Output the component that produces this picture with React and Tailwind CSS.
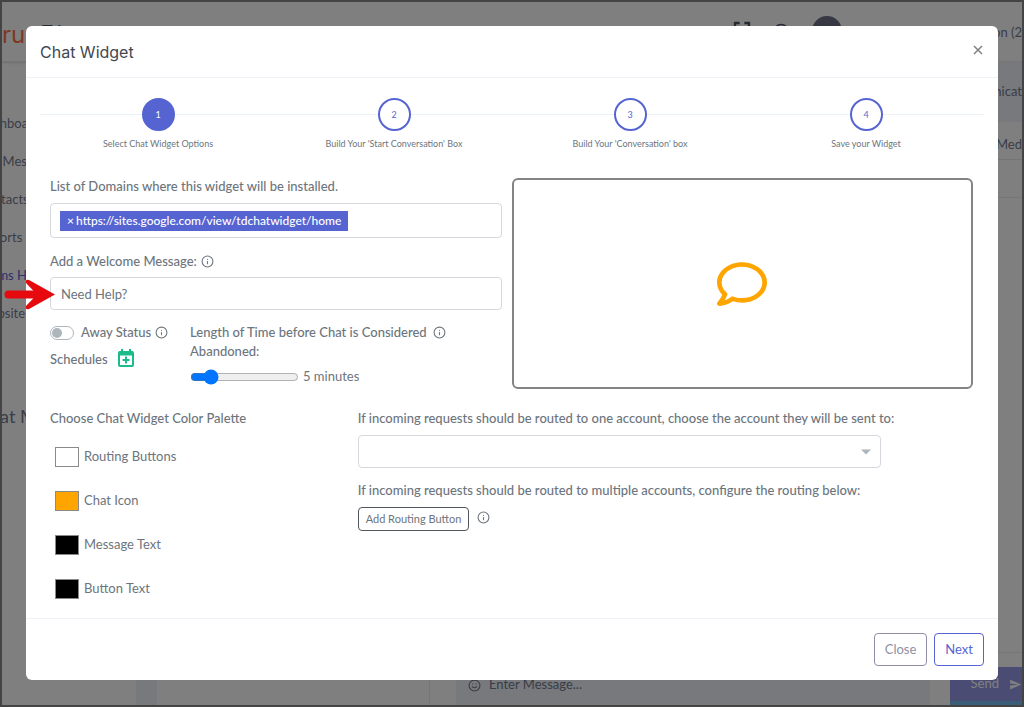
import { useState } from "react";
import { FaRegComment } from "react-icons/fa";
import { MdFullscreen, MdSend } from "react-icons/md";
import { Info, Search, Smile } from "lucide-react";

const steps = [
  "Select Chat Widget Options",
  "Build Your 'Start Conversation' Box",
  "Build Your 'Conversation' box",
  "Save your Widget",
];

const navItems = ["Dashboard", "Call Messages", "Contacts", "Reports", "Teams Hub", "Website Widget"];

function InfoIcon() {
  return <Info className="inline-block shrink-0 text-[#6c757d]" size={13} strokeWidth={2} aria-label="More information" />;
}

function Backdrop() {
  return (
    <div className="col-start-1 row-start-1 flex flex-col min-w-0 overflow-hidden bg-white text-[#757a90]" aria-hidden="true">
      <header className="h-[60px] shrink-0 flex items-start border-b border-[#ececec] shadow-sm">
        <span className="text-2xl leading-[66px] text-[#ff7048] w-10 font-['Inter',sans-serif]">ru</span>
        <span className="text-lg leading-6 pt-[17px] text-[#50546a]">Tristate</span>
        <div className="ml-auto flex gap-4 pt-3.5 text-[#50546a]">
          <MdFullscreen size={28} />
          <Search className="mt-1.5" size={20} />
          <div className="w-[30px] h-[30px] ml-1 rounded-full bg-[#6d7088]" />
        </div>
        <span className="w-[180px] pt-5 text-right leading-5">Division (2</span>
      </header>
      <div className="flex flex-1 min-h-0">
        <nav className="w-[134px] shrink-0 overflow-hidden pt-[42px]">
          {navItems.map((item) => (
            <div key={item} className={item === "Teams Hub" ? "h-[38px] leading-[38px] -ml-6 text-[#5a61d8]" : "h-[38px] leading-[38px] -ml-6"}>
              {item}
            </div>
          ))}
          <div className="mt-[72px] -ml-6 text-lg leading-6">Chat Messages</div>
        </nav>
        <div className="w-[21px] shrink-0 bg-[#eff3f8]" />
        <div className="w-[273px] shrink-0 border-r border-[#ececec]" />
        <div className="flex-1 flex flex-col min-w-0">
          <div className="h-[60px] shrink-0 bg-[#eff3f8] text-right leading-[58px]">Communicat</div>
          <div className="h-[38px] shrink-0 border-b border-[#e8e8e8] text-right leading-[44px]">Social Med</div>
          <div className="h-[38px] shrink-0 border-b border-[#ececec]" />
          <div className="flex-1 border-b border-[#ececec] mb-3.5" />
          <div className="flex h-[38px] shrink-0 pl-[26px]">
            <div className="flex-1 mr-5 bg-[#eff3f8] flex items-center gap-2 pl-3 pb-0.5">
              <Smile size={13} />
              <span>Enter Message...</span>
            </div>
            <div className="w-[72px] flex items-center justify-end gap-2.5 bg-[#9499e8] text-white border-b-4 border-[#74bdf0]">
              Send <MdSend size={13} />
            </div>
          </div>
        </div>
      </div>
    </div>
  );
}

function Stepper() {
  return (
    <ol className="grid grid-cols-4 pt-5">
      {steps.map((label, i) => (
        <li key={label} className="text-center text-[9px] leading-3">
          <div className="flex items-center">
            <span className="flex-1 h-px bg-[#eaf2fa]" />
            <span
              className={
                i === 0
                  ? "w-[33px] h-[33px] rounded-full flex items-center justify-center border-2 border-[#5664d2] bg-[#5664d2] text-white"
                  : "w-[33px] h-[33px] rounded-full flex items-center justify-center border-2 border-[#5664d2] bg-white text-[#5664d2]"
              }
            >
              {i + 1}
            </span>
            <span className="flex-1 h-px bg-[#eaf2fa]" />
          </div>
          <div className="mt-[7px]">{label}</div>
        </li>
      ))}
    </ol>
  );
}

function ColorField({ label, initial }) {
  const [color, setColor] = useState(initial);
  return (
    <label className="flex items-center gap-[5px] h-5">
      <input
        type="color"
        value={color}
        onChange={(e) => setColor(e.target.value)}
        className="w-6 h-5 p-0 border border-[#8a8a8a] appearance-none [&::-webkit-color-swatch-wrapper]:p-0 [&::-webkit-color-swatch]:border-0"
      />
      {label}
    </label>
  );
}

function WidgetOptions() {
  const [minutes, setMinutes] = useState(5);
  return (
    <div className="grid grid-cols-[minmax(0,49fr)_minmax(0,50fr)] gap-2.5">
      <div>
        <label htmlFor="domains" className="block leading-5 font-medium">
          List of Domains where this widget will be installed.
        </label>
        <div className="mt-[7px] h-[35px] flex items-center border border-[#d5d9de] rounded px-[9px]">
          <span className="h-5 px-[7px] flex items-center bg-[#5664d2] text-white text-xs font-medium whitespace-nowrap">
            <button type="button" aria-label="Remove domain" className="w-[9px] text-left">×</button>
            https://sites.google.com/view/tdchatwidget/home
          </span>
          <input id="domains" className="flex-1 min-w-0 outline-none" />
        </div>
        <div className="mt-[13px] flex items-center gap-1 leading-5">
          <label htmlFor="welcome" className="font-medium">Add a Welcome Message:</label>
          <InfoIcon />
        </div>
        <div className="relative mt-1.5">
          <input
            id="welcome"
            defaultValue="Need Help?"
            className="block w-full h-[33px] border border-[#d5d9de] rounded px-2.5 outline-none"
          />
          <svg className="absolute -left-[46px] top-0.5 w-[52px] h-[31px]" viewBox="0 0 52 31" fill="none" aria-hidden="true">
            <path d="M4.500 15.500H38" stroke="#e60a0f" strokeWidth="8" strokeLinecap="round" />
            <path d="M51 15.500L25 1Q21 0 22 4L33 15.500L22 27Q21 31 25 30Z" fill="#e60a0f" />
          </svg>
        </div>
        <div className="flex mt-[13px] leading-[19px] font-medium">
          <div className="w-[140px] shrink-0">
            <div className="flex items-center">
              <input
                id="away"
                type="checkbox"
                role="switch"
                className="appearance-none w-6 h-3.5 mr-[7px] rounded-full border border-[#adb5bd] bg-white before:block before:w-2.5 before:h-2.5 before:m-px before:rounded-full before:bg-[#adb5bd] checked:before:ml-[11px]"
              />
              <label htmlFor="away" className="mr-1">Away Status</label>
              <InfoIcon />
            </div>
            <div className="flex items-center mt-2">
              Schedules
              <button type="button" aria-label="Add schedule" className="ml-2.5 -mt-1">
                <svg width="16" height="18" viewBox="0 0 16 18" fill="none" stroke="#1cbb8c" strokeWidth="2">
                  <rect x="1" y="3" width="14" height="14" rx="1" />
                  <path d="M1 4.500H15" strokeWidth="4" />
                  <path d="M4 0V4M12 0V4M8 7.500V14.500M4.500 11H11.500" />
                </svg>
              </button>
            </div>
          </div>
          <div>
            <div className="flex items-center gap-1.5">
              <label htmlFor="timeout">Length of Time before Chat is Considered</label>
              <InfoIcon />
            </div>
            <div>Abandoned:</div>
            <div className="flex items-center gap-1 mt-1.5 font-normal">
              <input
                id="timeout"
                type="range"
                min="0"
                max="36"
                value={minutes}
                onChange={(e) => setMinutes(e.target.value)}
                className="w-[109px] accent-[#0075ff]"
              />
              {minutes} minutes
            </div>
          </div>
        </div>
      </div>
      <div className="mt-0.5 h-[211px] flex items-center justify-center border-2 border-[#848484] rounded-md">
        <FaRegComment size={50} color="#ffa500" />
      </div>
    </div>
  );
}

export default function App() {
  return (
    <div className="min-h-screen grid border-2 border-[#444] text-[13px] text-[#6c757d] font-['Lato',sans-serif]">
      <Backdrop />
      <div className="col-start-1 row-start-1 min-w-0 bg-black/50 p-6 relative">
        <section role="dialog" aria-labelledby="dialog-title" className="bg-white rounded-md">
          <header className="h-[52px] flex items-center justify-between px-3.5 border-b border-[#eff2f7]">
            <h1 id="dialog-title" className="text-base text-[#41484f] font-['Inter',sans-serif]">Chat Widget</h1>
            <button type="button" aria-label="Close dialog" className="-mt-1">
              <svg width="12" height="12" viewBox="0 0 12 12" stroke="#808080" strokeWidth="1.500">
                <path d="M2 2L10 10M10 2L2 10" />
              </svg>
            </button>
          </header>
          <div className="px-3.5">
            <Stepper />
            <div className="pl-2.5 pr-[11px] pt-[26px]">
              <WidgetOptions />
              <div className="grid grid-cols-[minmax(0,1fr)_minmax(0,2fr)] mt-[19px]">
                <div>
                  <h2 className="leading-5 font-medium">Choose Chat Widget Color Palette</h2>
                  <div className="flex flex-col gap-6 pt-[19px] pl-[5px]">
                    <ColorField label="Routing Buttons" initial="#ffffff" />
                    <ColorField label="Chat Icon" initial="#ffa500" />
                    <ColorField label="Message Text" initial="#000000" />
                    <ColorField label="Button Text" initial="#000000" />
                  </div>
                </div>
                <div className="pr-[92px]">
                  <label htmlFor="account" className="block leading-5 font-medium whitespace-nowrap">
                    If incoming requests should be routed to one account, choose the account they will be sent to:
                  </label>
                  <div className="relative mt-[7px]">
                    <select id="account" className="block w-full h-[33px] appearance-none border border-[#d5d9de] rounded px-2.5 bg-white">
                      <option value=""></option>
                    </select>
                    <svg className="absolute right-2.5 top-3.5 pointer-events-none" width="10" height="6" viewBox="0 0 10 6" aria-hidden="true">
                      <path d="M0 0.500H10L5 5.500Z" fill="#adb5bd" />
                    </svg>
                  </div>
                  <p className="mt-3 leading-5 font-medium">
                    If incoming requests should be routed to multiple accounts, configure the routing below:
                  </p>
                  <div className="flex items-start gap-2 mt-[7px]">
                    <button type="button" className="h-6 px-[7px] border border-[#50565c] rounded-sm text-[11px]">
                      Add Routing Button
                    </button>
                    <span className="flex pt-1"><InfoIcon /></span>
                  </div>
                </div>
              </div>
            </div>
          </div>
          <footer className="mt-[19px] h-[62px] flex items-center justify-end gap-[7px] px-3.5 border-t border-[#eff2f7]">
            <button type="button" className="h-[33px] px-2.5 border border-[#8f8fa5] rounded text-[#8f8fa5]">Close</button>
            <button type="button" className="h-[33px] px-2.5 border border-[#5664d2] rounded text-[#5664d2]">Next</button>
          </footer>
        </section>
      </div>
    </div>
  );
}
